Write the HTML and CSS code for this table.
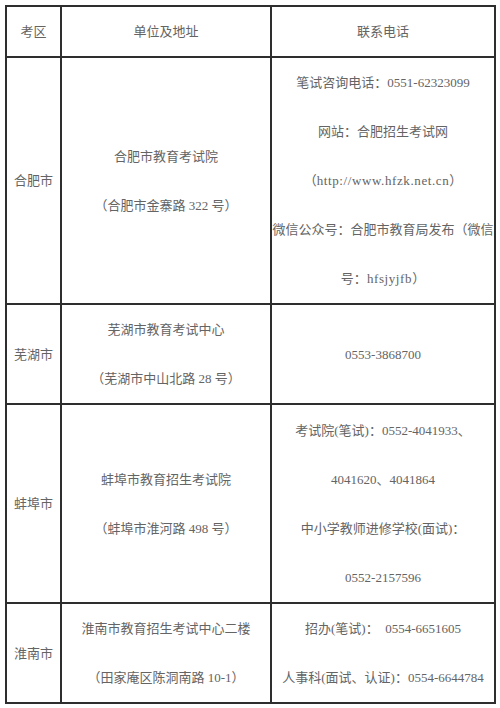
FILE: index.html
```html
<!DOCTYPE html>
<html lang="zh-CN">
<head>
<meta charset="utf-8">
<title>考区联系方式</title>
<link rel="stylesheet" href="styles.css">
</head>
<body>
<div class="grid">
  <div class="cell head">考区</div>
  <div class="cell head">单位及地址</div>
  <div class="cell head">联系电话</div>

  <div class="cell r-hf">合肥市</div>
  <div class="cell r-hf">
    <span class="ln">合肥市教育考试院</span>
    <span class="ln">（合肥市金寨路 322 号）</span>
  </div>
  <div class="cell r-hf">
    <span class="ln">笔试咨询电话：0551-62323099</span>
    <span class="ln">网站：合肥招生考试网</span>
    <span class="ln">（<span class="url">http://www.hfzk.net.cn</span>）</span>
    <span class="ln">微信公众号：合肥市教育局发布（微信</span>
    <span class="ln">号：<span class="url">hfsjyjfb</span>）</span>
  </div>

  <div class="cell r-wh">芜湖市</div>
  <div class="cell r-wh">
    <span class="ln">芜湖市教育考试中心</span>
    <span class="ln">（芜湖市中山北路 28 号）</span>
  </div>
  <div class="cell r-wh">
    <span class="ln">0553-3868700</span>
  </div>

  <div class="cell r-bb">蚌埠市</div>
  <div class="cell r-bb">
    <span class="ln">蚌埠市教育招生考试院</span>
    <span class="ln">（蚌埠市淮河路 498 号）</span>
  </div>
  <div class="cell r-bb">
    <span class="ln">考试院(笔试)：0552-4041933、</span>
    <span class="ln">4041620、4041864</span>
    <span class="ln">中小学教师进修学校(面试)：</span>
    <span class="ln">0552-2157596</span>
  </div>

  <div class="cell r-hn">淮南市</div>
  <div class="cell r-hn">
    <span class="ln">淮南市教育招生考试中心二楼</span>
    <span class="ln">（田家庵区陈洞南路 10-1）</span>
  </div>
  <div class="cell r-hn">
    <span class="ln">招办(笔试)：&nbsp; 0554-6651605</span>
    <span class="ln">人事科(面试、认证)：0554-6644784</span>
  </div>
</div>
</body>
</html>
```

FILE: styles.css
```css
html, body {
  margin: 0;
  padding: 0;
  background: #ffffff;
}

body {
  font-family: "Liberation Serif", "Noto Sans CJK SC", serif;
  font-size: 13px;
  color: #646464;
}

.grid {
  margin: 5px 0 0 5px;
  width: 491px;
  box-sizing: border-box;
  display: grid;
  grid-template-columns: 53px 208px 222px;
  grid-template-rows: 49px 245px 98px 197px 98px;
  gap: 2px;
  padding: 2px;
  background: #2e2e2e;
}

.cell {
  background: #ffffff;
  display: flex;
  flex-direction: column;
  align-items: center;
  justify-content: center;
  text-align: center;
  line-height: 49px;
  white-space: nowrap;
  overflow: hidden;
}

.ln {
  display: block;
}

.url {
  letter-spacing: 0.6px;
}
```
